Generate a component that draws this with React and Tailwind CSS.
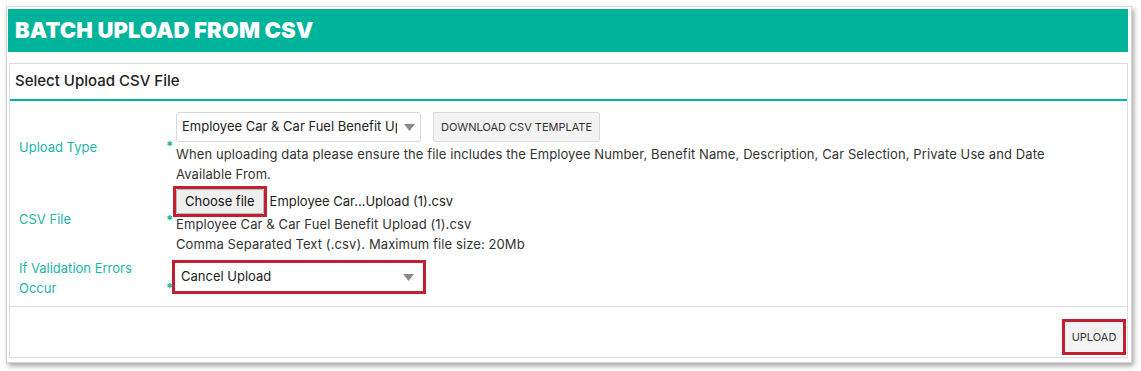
const teal = '#00b49c';

function Caret() {
  return (
    <svg width="11" height="7" viewBox="0 0 11 7" className="shrink-0">
      <path d="M0 0 L11 0 L5.5 7 Z" fill="#8a8a8a" />
    </svg>
  );
}

function Star({ className = '' }) {
  return (
    <div className={`w-[10px] text-[13px] leading-none font-bold text-[#14b39d] ${className}`}>*</div>
  );
}

export default function App() {
  return (
    <div className="w-[1141px] h-[371px] bg-white pt-[6px] pl-[6px] font-['Inter',sans-serif] text-[#222]">
      <div className="w-[1126px] border border-[#d6d6d6] shadow-[2px_3px_5px_rgba(0,0,0,0.35)] bg-white pl-[1px] pr-[3px] pt-[2px] pb-[4px]">
        {/* header bar */}
        <div className="h-[43px] bg-[#00b49c] flex items-center px-[7px]">
          <h1 className="text-white text-[22px] font-black tracking-[0.1px]">BATCH UPLOAD FROM CSV</h1>
        </div>

        {/* panel */}
        <div className="mt-[11px] ml-[1px] border border-[#dcdcdc] flex flex-col">
          <div className="h-[37px] shrink-0 border-b-2 border-[#00b49c] flex items-center px-[5px]">
            <h2 className="text-[15px] font-medium text-[#222]">Select Upload CSV File</h2>
          </div>

          <div className="pt-[11px] pb-[8px] border-b border-[#dcdcdc] text-[13px] text-[#333]">
            {/* upload type */}
            <div className="flex">
              <div className="w-[156px] flex items-center pl-[9px] text-[#1cb5a8]">Upload Type</div>
              <Star className="pt-[28px]" />
              <div className="flex-1">
                <div className="flex gap-[12px]">
                  <div className="w-[245px] h-[30px] border border-[#d8d8d8] rounded-[3px] bg-white flex items-center pl-[5px] pr-[5px] overflow-hidden">
                    <span className="flex-1 mr-[7px] whitespace-nowrap overflow-hidden text-[13px] text-[#222]">Employee Car &amp; Car Fuel Benefit Upload</span>
                    <Caret />
                  </div>
                  <button className="h-[30px] px-[7px] border border-[#dcdcdc] rounded-[2px] bg-[#f3f3f3] text-[11px] text-[#333]">
                    DOWNLOAD CSV TEMPLATE
                  </button>
                </div>
                <p className="leading-[20px] mt-[2px] w-[890px] tracking-[0.1px]">
                  When uploading data please ensure the file includes the Employee Number, Benefit Name, Description, Car Selection, Private Use and Date Available From.
                </p>
              </div>
            </div>

            {/* csv file */}
            <div className="flex mt-[2px]">
              <div className="w-[156px] flex items-center pl-[9px] text-[#1cb5a8]">CSV File</div>
              <Star className="pt-[28px]" />
              <div className="flex-1 -ml-[3px]">
                <div className="flex items-center">
                  <div className="border-[3px] border-[#c31f33]">
                    <button className="h-[25px] px-[8px] bg-[#efefef] border border-[#bbb] rounded-[2px] text-[13px] text-[#111]">Choose file</button>
                  </div>
                  <span className="ml-[3px] text-[#222]">Employee Car...Upload (1).csv</span>
                </div>
                <div className="pl-[3px] leading-[20px] -mt-[3px] tracking-[0.1px]">
                  <p>Employee Car &amp; Car Fuel Benefit Upload (1).csv</p>
                  <p>Comma Separated Text (.csv). Maximum file size: 20Mb</p>
                </div>
              </div>
            </div>

            {/* validation */}
            <div className="flex mt-[4px]">
              <div className="w-[156px] pl-[9px] leading-[20px] text-[#1cb5a8]">If Validation Errors<br />Occur</div>
              <Star className="pt-[24px]" />
              <div className="flex-1 -ml-[4px] pt-[2px]">
                <div className="w-[254px] h-[34px] border-[3px] border-[#c31f33] bg-white flex items-center pl-[6px] pr-[9px]">
                  <span className="flex-1 text-[13px] text-[#222]">Cancel Upload</span>
                  <Caret />
                </div>
              </div>
            </div>
          </div>

          {/* footer */}
          <div className="h-[50px] flex items-start justify-end pr-[1px] pt-[12px]">
            <div className="border-[3px] border-[#c31f33]">
              <button className="h-[30px] w-[58px] bg-[#f3f3f3] text-[11px] text-[#333]">UPLOAD</button>
            </div>
          </div>
        </div>
      </div>
    </div>
  );
}
